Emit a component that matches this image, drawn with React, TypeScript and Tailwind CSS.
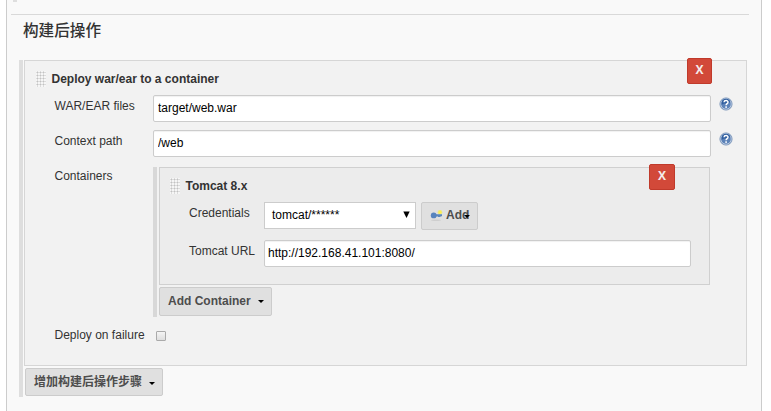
import type { ReactNode } from "react";

function Grip() {
  return (
    <svg width="10" height="16" className="shrink-0" shapeRendering="crispEdges">
      <defs>
        <pattern id="dots" width="3" height="3" patternUnits="userSpaceOnUse">
          <rect width="3" height="3" fill="#f6f6f6" />
          <rect x="1" width="1" height="3" fill="#dcdcdc" />
          <rect y="1" width="3" height="1" fill="#dcdcdc" />
          <rect x="1" y="1" width="1" height="1" fill="#c2c2c2" />
        </pattern>
      </defs>
      <rect width="10" height="16" fill="url(#dots)" />
    </svg>
  );
}

function Help() {
  return (
    <svg width="14" height="14" viewBox="0 0 14 14" className="mt-[2px] ml-[7.5px] shrink-0">
      <circle cx="7" cy="7" r="6.1" fill="#5c82b8" stroke="#7f98ba" strokeWidth="0.9" />
      <circle cx="7" cy="7" r="5.2" fill="none" stroke="#c3d0e3" strokeWidth="0.9" />
      <path d="M2.6 5A4.6 4.6 0 0 1 11.4 5C8 8 5 5 2.6 8Z" fill="#315f9f" />
      <path d="M5 5.3C5.2 3 9.1 3.1 9 5.2C8.9 6.6 7.1 6.6 7.1 8.3" fill="none" stroke="#fff" strokeWidth="1.5" />
      <rect x="6.3" y="9.3" width="1.6" height="1.6" fill="#fff" />
    </svg>
  );
}

function KeyIcon() {
  return (
    <svg width="14" height="14" viewBox="0 0 14 14" className="shrink-0">
      <ellipse cx="6" cy="12.2" rx="5" ry="0.8" fill="#cecece" />
      <circle cx="10" cy="4.2" r="2.3" fill="#eee878" />
      <circle cx="10" cy="4.2" r="1.2" fill="#fff04c" />
      <path d="M6 6.2H12V8.2H10.5V9H8V8.4H6Z" fill="#5c87bb" />
      <circle cx="3.7" cy="7.4" r="2.9" fill="#5784bd" />
    </svg>
  );
}

function Caret() {
  return (
    <svg width="6" height="3" viewBox="0 0 6 3" className="block shrink-0">
      <path d="M0 0H6L3 3Z" fill="#000" />
    </svg>
  );
}

function DeleteButton({ className }: { className: string }) {
  return (
    <button className={"absolute h-[26px] rounded-[2px] border border-[#c03a2b] bg-[#d24939] pb-[2px] font-['Open_Sans',sans-serif] text-[12px] leading-[22px] font-bold text-[#f4eceb] " + className}>
      X
    </button>
  );
}

function Row({ label, height, children }: { label: string; height: string; children: ReactNode }) {
  return (
    <div className={"flex " + height}>
      <div className="w-[99px] shrink-0 pt-[3px] pl-[0.5px] leading-[16px]">{label}</div>
      {children}
    </div>
  );
}

const field =
  "h-[27px] rounded-[2px] border border-[#ccc] bg-white pr-[4px] pb-[2px] text-[12px] text-black shadow-[inset_0_1px_1px_rgba(0,0,0,0.06)] outline-none";
const button =
  "flex items-center rounded-[2px] border border-[#ccc] bg-[#e0e0e0] text-[12px] font-bold text-[#4d4d4d]";

export default function App() {
  return (
    <div className="h-[411px] overflow-hidden bg-white pl-[6px] font-['Liberation_Sans','Noto_Sans_CJK_SC',sans-serif] text-[12px] text-[#333]">
      <main className="h-[411px] w-[756px] border-x border-[#ccc] bg-[#f9f9f9]">
        <div className="ml-[6px] h-[2px] w-[4px] bg-[#dedede]" />
        <div className="mt-[12px] ml-[4px] h-px w-[738px] bg-[#d9d9d9]" />
        <h2 className="ml-[16px] h-[45px] pt-[4px] text-[15.6px] leading-[24px] font-medium text-[#333]">构建后操作</h2>
        <div className="ml-[12px] flex h-[337px] w-[728px] flex-col border-l-4 border-[#dedede] pl-px">
          <section className="relative h-[306px] border border-[#d6d6d6] bg-[#f2f2f2] pt-[10px]">
            <DeleteButton className="top-[-3px] left-[662px] w-[25px]" />
            <div className="flex h-[16px] pl-[11px]">
              <Grip />
              <h3 className="ml-[5.5px] text-[12px] leading-[16px] font-bold">Deploy war/ear to a container</h3>
            </div>
            <div className="mt-[8px] pl-[29px]">
              <Row label="WAR/EAR files" height="h-[35px]">
                <input className={field + " w-[558px] pl-[4px]"} defaultValue="target/web.war" />
                <Help />
              </Row>
              <Row label="Context path" height="h-[35px]">
                <input className={field + " w-[558px] pl-[4px]"} defaultValue="/web" />
                <Help />
              </Row>
              <Row label="Containers" height="h-[159px]">
                <div className="mt-[2px] h-[150px] w-[557px] border-l-4 border-[#d8d8d8] pl-[2px]">
                  <section className="relative h-[118px] border border-[#d0d0d0] bg-[#ececec] pt-[10px]">
                    <DeleteButton className="top-[-4px] left-[489px] w-[26px]" />
                    <div className="flex h-[16px] pl-[10px]">
                      <Grip />
                      <h3 className="ml-[5.5px] text-[12px] leading-[16px] font-bold">Tomcat 8.x</h3>
                    </div>
                    <div className="mt-[8px] flex h-[38px] pl-[29px]">
                      <div className="w-[75px] shrink-0 pt-[3px] leading-[16px]">Credentials</div>
                      <div className="flex h-[27px] w-[152px] items-center justify-between border border-[#ccc] bg-white pr-[5px] pb-[2px] pl-[7px] text-black">
                        <span>tomcat/******</span>
                        <svg width="7" height="7" viewBox="0 0 7 7">
                          <path d="M0.3 0.5H6.7L3.5 7Z" fill="#000" />
                        </svg>
                      </div>
                      <button className={button + " ml-[5px] h-[28px] w-[57px] pb-[2px] pl-[8px]"}>
                        <KeyIcon />
                        <span className="ml-[2px]">Add</span>
                        <span className="mt-[3px] -ml-[5px]"><Caret /></span>
                      </button>
                    </div>
                    <div className="flex pl-[29px]">
                      <div className="w-[75px] shrink-0 pt-[3px] leading-[16px]">Tomcat URL</div>
                      <input className={field + " w-[427px] pl-[3px]"} defaultValue="http://192.168.41.101:8080/" />
                    </div>
                  </section>
                  <button className={button + " mt-[2px] h-[29px] w-[113px] pb-px pl-[8px]"}>
                    <span>Add Container</span>
                    <span className="mt-px ml-[7px]"><Caret /></span>
                  </button>
                </div>
              </Row>
              <Row label="Deploy on failure" height="h-[24px]">
                <span className="mt-[7px] ml-[3px] h-[10px] w-[10px] rounded-[1px] border border-[#aaa] bg-gradient-to-b from-[#f4f4f4] to-[#dedede]" />
              </Row>
            </div>
          </section>
          <button className={button + " mt-[2px] ml-px h-[28px] w-[138px] pb-px pl-[8px]"}>
            <span>增加构建后操作步骤</span>
            <span className="mt-[3px] ml-[7px]"><Caret /></span>
          </button>
        </div>
      </main>
    </div>
  );
}
